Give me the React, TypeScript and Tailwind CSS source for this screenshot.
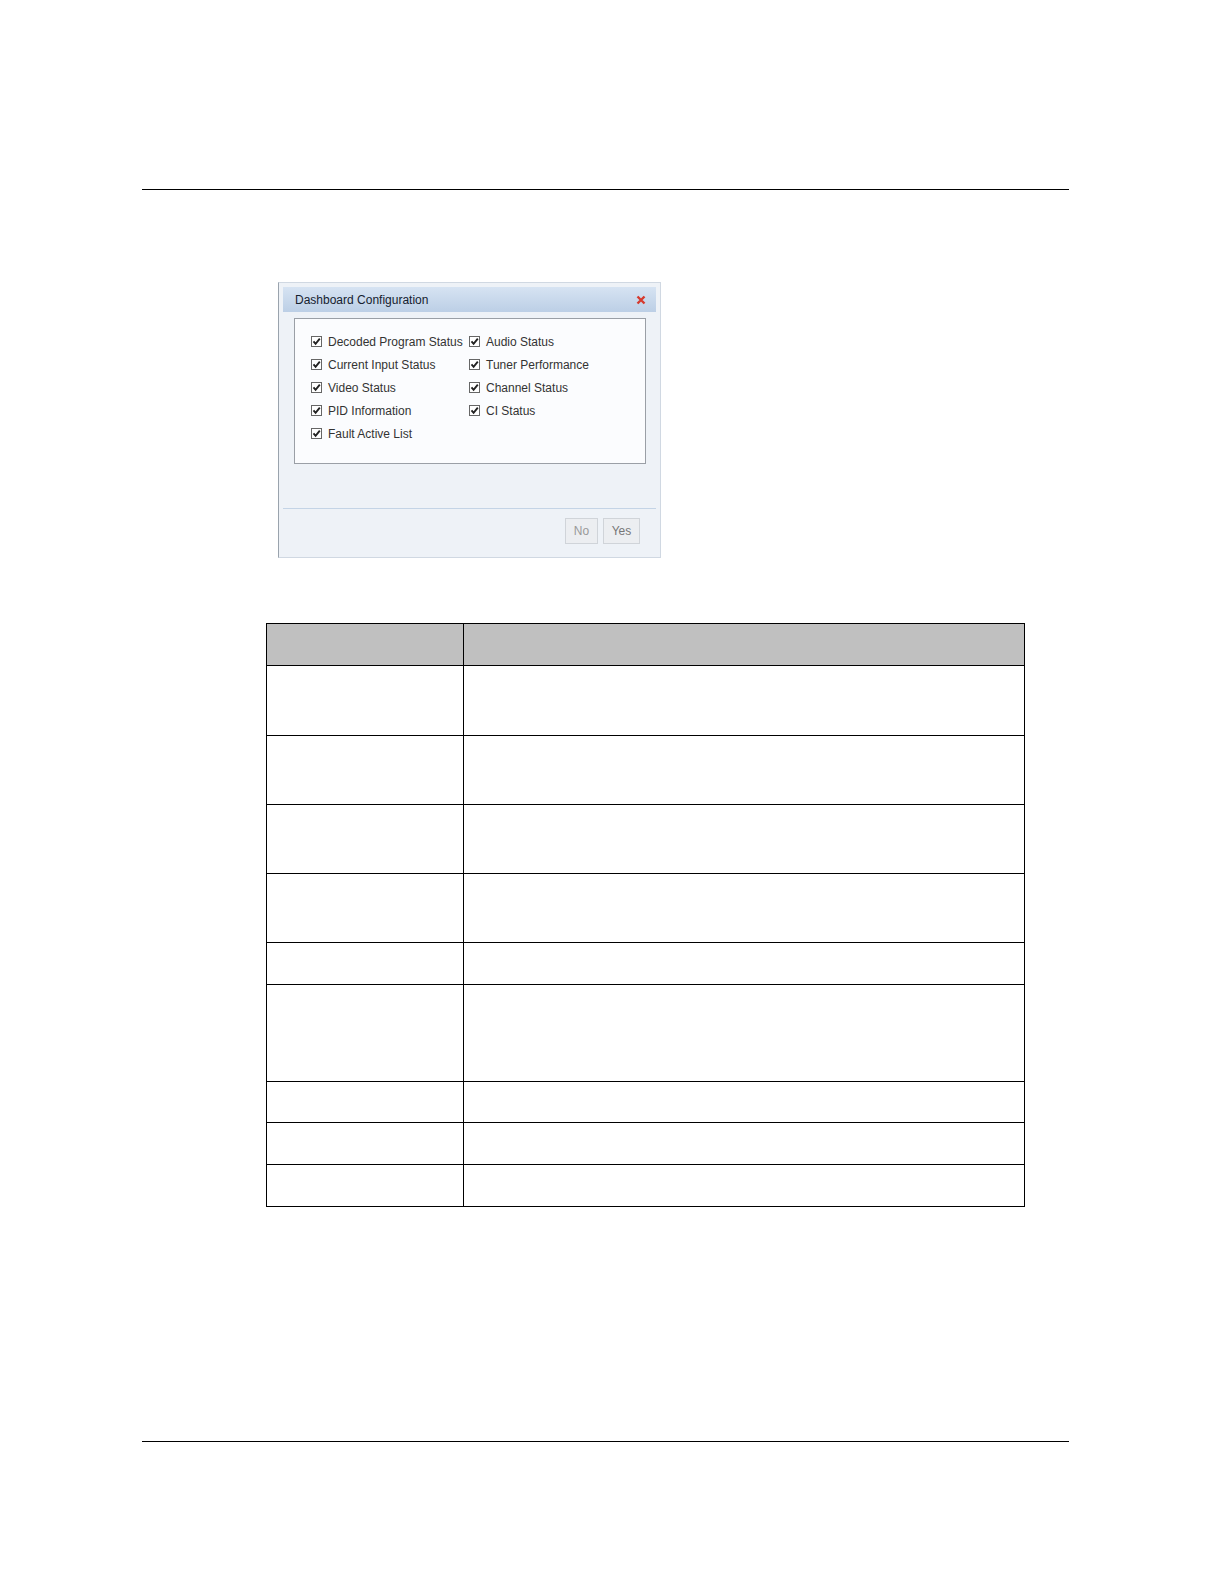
import React from "react";

const left = ["Decoded Program Status", "Current Input Status", "Video Status", "PID Information", "Fault Active List"];
const right = ["Audio Status", "Tuner Performance", "Channel Status", "CI Status"];

// row heights of the empty table below the dialog
const rowHeights = [70, 69, 69, 69, 42, 97, 41, 42, 42];

function Check({ label }: { label: string }) {
    return (
        <div className="flex h-[23px] items-center gap-[6px]">
            <span className="flex h-[11px] w-[11px] items-center justify-center border border-[#666] bg-white">
                <svg width="9" height="9" viewBox="0 0 9 9">
                    <path d="M1.5 4.3 L3.6 6.8 L7.8 1.6" fill="none" stroke="#222" strokeWidth="1.9" />
                </svg>
            </span>
            <span className="text-[12px] text-[#333]">{label}</span>
        </div>
    );
}

export default function App() {
    return (
        <div className="w-full bg-white pb-[100px]" style={{ fontFamily: "'Liberation Sans', Arial, sans-serif" }}>
            <div className="pt-[189px]">
                <div className="ml-[142px] w-[927px] border-t border-black" />
            </div>

            {/* dialog */}
            <div className="ml-[278px] mt-[92px] h-[276px] w-[383px] border border-[#d0d8e2] border-l-[#9aa3ad] bg-[#eef2f7] px-[4px] pt-[4px]">
                <div className="flex h-[25px] items-center justify-between bg-gradient-to-b from-[#d6e3f2] to-[#bccfe6] pl-[12px] pr-[10px]">
                    <span className="text-[12px] text-[#15212f]">Dashboard Configuration</span>
                    <svg width="10" height="10" viewBox="0 0 10 10">
                        <path d="M1.5 1.5 L8.5 8.5 M8.5 1.5 L1.5 8.5" stroke="#d63a2e" strokeWidth="2.4" />
                    </svg>
                </div>
                <div className="ml-[11px] mt-[6px] h-[146px] w-[352px] border border-[#9a9fa6] bg-[#fbfcfe] pl-[16px] pt-[11px]">
                    <div className="flex">
                        <div className="w-[158px]">
                            {left.map((l) => (
                                <Check key={l} label={l} />
                            ))}
                        </div>
                        <div>
                            {right.map((l) => (
                                <Check key={l} label={l} />
                            ))}
                        </div>
                    </div>
                </div>
                <div className="mt-[44px] border-t border-[#c4d4e6]" />
                <div className="mt-[9px] flex justify-end gap-[5px] pr-[16px]">
                    <button className="h-[26px] w-[33px] border border-[#d0d4d9] bg-[#eceef1] text-[12px] text-[#999]">No</button>
                    <button className="h-[26px] w-[37px] border border-[#d0d4d9] bg-[#eceef1] text-[12px] text-[#777]">Yes</button>
                </div>
            </div>

            {/* table */}
            <div className="ml-[266px] mt-[65px] w-[759px] border-r border-b border-black">
                <div className="flex h-[42px] border-t border-l border-black bg-[#c0c0c0]">
                    <div className="w-[197px] border-r border-black" />
                    <div className="flex-1" />
                </div>
                {rowHeights.map((h, i) => (
                    <div key={i} className="flex border-t border-l border-black" style={{ height: h }}>
                        <div className="w-[197px] border-r border-black" />
                        <div className="flex-1" />
                    </div>
                ))}
            </div>

            <div className="ml-[142px] mt-[234px] w-[927px] border-t border-black" />
        </div>
    );
}
